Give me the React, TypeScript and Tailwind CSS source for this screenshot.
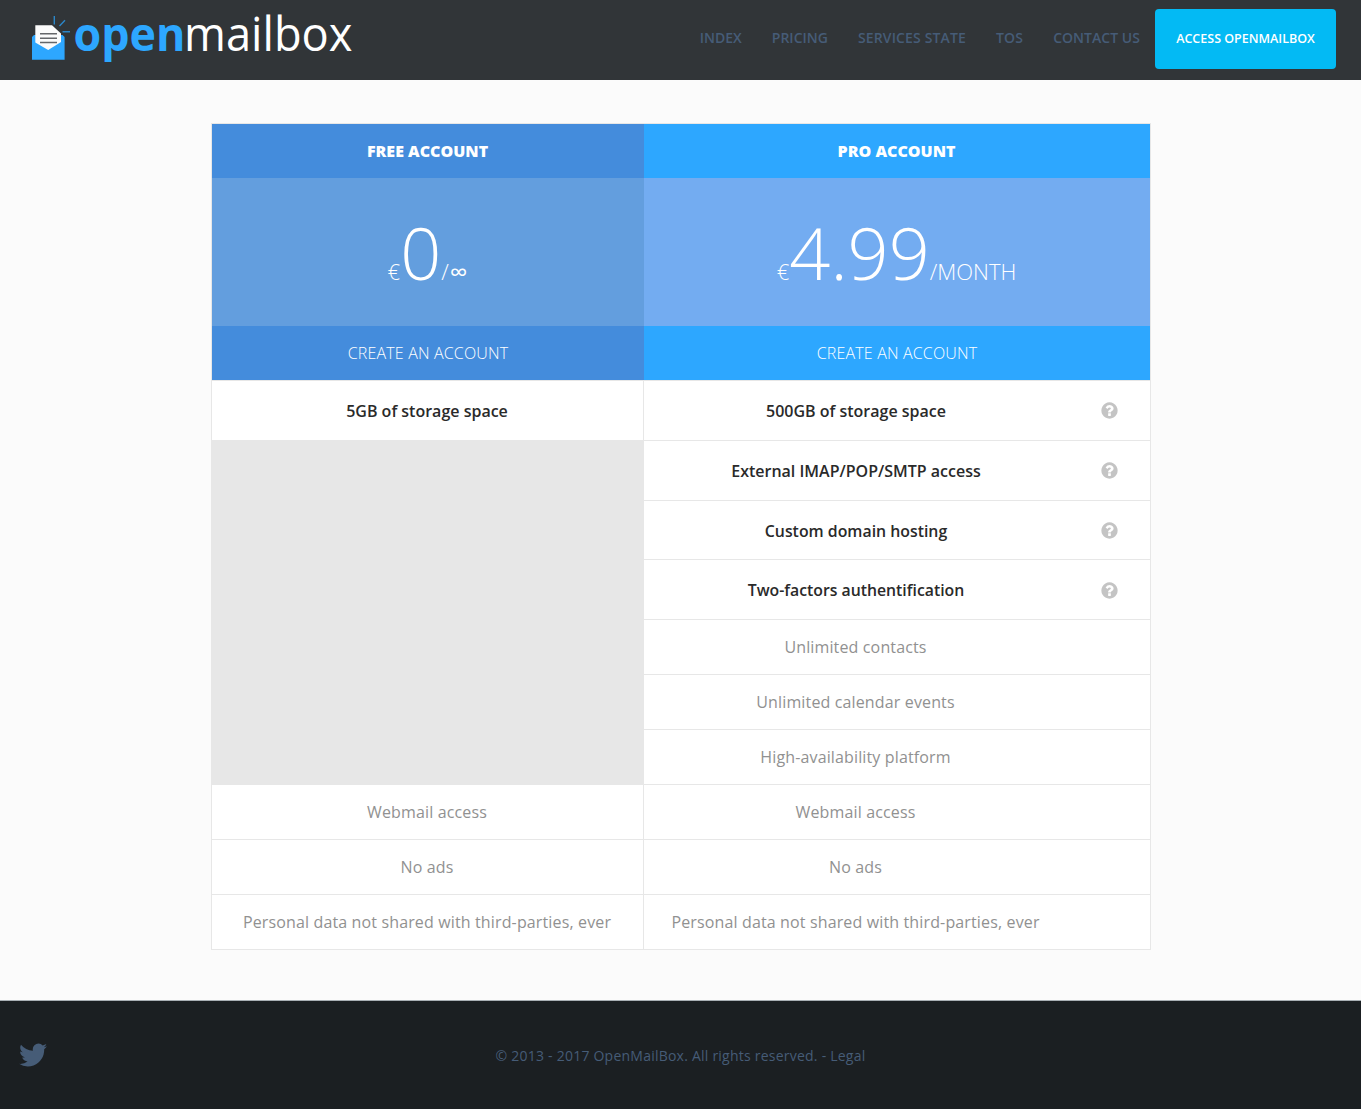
import React from "react";

const navItems = [
  { label: "INDEX", tracking: "" },
  { label: "PRICING", tracking: "" },
  { label: "SERVICES STATE", tracking: "tracking-[0.14px]" },
  { label: "TOS", tracking: "tracking-[0.2px]" },
  { label: "CONTACT US", tracking: "tracking-[0.03px]" },
];

type Row = { label: string; height: string; strong?: string; icon?: string };

const proRows: Row[] = [
  { label: "500GB of storage space", strong: "pl-px", height: "h-[60px]" },
  { label: "External IMAP/POP/SMTP access", strong: "pl-px", height: "h-[60px]" },
  { label: "Custom domain hosting", strong: "pt-[3px] pl-px text-[15.85px]", height: "h-[59px]" },
  { label: "Two-factors authentification", strong: "pt-[3px] pl-px text-[15.8px]", height: "h-[60px]", icon: "pt-0.5" },
  { label: "Unlimited contacts", height: "h-[55px]" },
  { label: "Unlimited calendar events", height: "h-[55px]" },
  { label: "High-availability platform", height: "h-[55px]" },
  { label: "Webmail access", height: "h-[55px]" },
  { label: "No ads", height: "h-[55px]" },
  { label: "Personal data not shared with third-parties, ever", height: "h-[55px]" },
];

const freeRows = ["Webmail access", "No ads", "Personal data not shared with third-parties, ever"];

function Logo() {
  return (
    <svg width="340" height="72" viewBox="28 0 340 72" className="block overflow-visible" aria-label="openmailbox">
      <path d="M32 37 L34 35 H62.5 L64.6 37 V59.7 H32 Z" fill="#2da7ff" />
      <path d="M35.3 25.2 H52 L61 33.5 V42 L48.2 50 L35.3 42.5 Z" fill="#fbfbfb" />
      <path d="M40 33.7 H57 M40 38.2 H57 M40 42.6 H57" stroke="#65676a" strokeWidth="1.5" />
      <path d="M54.3 16 V24.5 M59.5 26 L65 20.3 M62.5 31.7 H70" stroke="#2b86c8" strokeWidth="1.4" />
      <text x="73.4" y="50.5" fontSize="46" fontWeight="700" fill="#2da7ff" textLength="112" lengthAdjust="spacingAndGlyphs" className="font-['Open_Sans',sans-serif]">open</text>
      <text x="184" y="50.5" fontSize="48" fontWeight="400" fill="#fff" textLength="168.5" lengthAdjust="spacingAndGlyphs" className="font-['Open_Sans',sans-serif]">mailbox</text>
    </svg>
  );
}

function HelpIcon() {
  return (
    <svg width="19" height="19" viewBox="0 0 1792 1792" fill="#c4c4c4" className="block">
      <path d="M1024 1376v-192q0-14-9-23t-23-9h-192q-14 0-23 9t-9 23v192q0 14 9 23t23 9h192q14 0 23-9t9-23zm256-672q0-88-55.5-163t-138.5-116-170-41q-243 0-371 213-15 24 8 42l132 100q7 6 19 6 16 0 25-12 53-68 86-92 34-24 86-24 48 0 85.5 26t37.5 59q0 38-20 61t-68 45q-63 28-115.5 86.5t-52.5 125.5v36q0 14 9 23t23 9h192q14 0 23-9t9-23q0-19 21.5-49.5t54.5-49.5q32-18 49-28.5t46-35 44.5-48 28-60.5 12.5-81zm384 192q0 209-103 385.5t-279.5 279.5-385.5 103-385.5-103-279.5-279.5-103-385.5 103-385.5 279.5-279.5 385.5-103 385.5 103 279.5 279.5 103 385.5z" />
    </svg>
  );
}

function TwitterIcon() {
  return (
    <svg width="32" height="32" viewBox="0 0 1792 1792" fill="#465c77" className="block">
      <path d="M1684 408q-67 98-162 167 1 14 1 42 0 130-38 259.5t-115.5 248.5-184.5 210.5-258 146-323 54.5q-271 0-491-145 35 4 78 4 225 0 401-138-105-2-188-64.5t-114-159.5q33 5 61 5 43 0 85-11-112-23-185.5-111.5t-73.5-205.5v-4q68 38 146 41-66-44-105-115t-39-154q0-88 44-163 121 149 294.5 238.5t371.5 99.5q-8-38-8-74 0-134 94.5-228.5t228.5-94.5q140 0 236 102 109-21 205-78-37 115-142 178 93-10 186-50z" />
    </svg>
  );
}

function PlanHead({ title, amount, unit, solid, soft }: { title: string; amount: string; unit: React.ReactNode; solid: string; soft: string }) {
  return (
    <div className="text-white">
      <div className={`flex h-[54px] items-center justify-center text-base font-extrabold ${solid}`}>{title}</div>
      <div className={`flex h-[148px] items-baseline justify-center text-[22px] leading-[148px] font-light ${soft}`}>
        <span>€</span>
        <span className="text-[72px]">{amount}</span>
        <span>{unit}</span>
      </div>
      <div className={`flex h-[54px] items-center justify-center pl-px text-base font-light tracking-[0.16px] ${solid}`}>CREATE AN ACCOUNT</div>
    </div>
  );
}

export default function App() {
  return (
    <div className="flex h-[1109px] flex-col bg-[#fbfbfb] font-['Open_Sans',sans-serif]">
      <header className="flex h-20 shrink-0 items-start justify-between bg-[#313538] pr-[25px] pl-7">
        <Logo />
        <nav className="flex pt-[9px]">
          {navItems.map((item) => (
            <a key={item.label} className={`px-[15px] pt-[19px] text-sm leading-5 font-semibold whitespace-nowrap text-[#465c77] ${item.tracking}`}>{item.label}</a>
          ))}
          <a className="flex h-[60px] w-[181px] items-center justify-center rounded bg-[#03baf4] text-[12.5px] font-semibold whitespace-nowrap text-white">
            ACCESS OPENMAILBOX
          </a>
        </nav>
      </header>

      <main className="flex grow justify-center pt-[43px]">
        <div className="h-[827px] w-[940px] border border-[#e7e7e7] bg-white">
          <div className="grid grid-cols-[432px_506px]">
            <PlanHead title="FREE ACCOUNT" amount="0" unit={<>/<span className="ml-px inline-block translate-y-px text-[25px] leading-none font-normal">∞</span></>} solid="bg-[#448cdc]" soft="bg-[#639ede]" />
            <PlanHead title="PRO ACCOUNT" amount="4.99" unit="/MONTH" solid="bg-[#2da7ff]" soft="bg-[#73acf1]" />
          </div>
          <div className="grid grid-cols-[432px_506px] text-center text-base text-[#919191]">
            <div className="border-r border-[#e7e7e7]">
              <div className="flex h-[60px] items-center justify-center border-t border-[#e7e7e7] font-semibold text-[#2a2a2a]">5GB of storage space</div>
              <div className="h-[344px] bg-[#e7e7e7]" />
              {freeRows.map((label) => (
                <div key={label} className="flex h-[55px] items-center justify-center border-t border-[#e7e7e7] tracking-[0.14px]">{label}</div>
              ))}
            </div>
            <div>
              {proRows.map((row) => (
                <div key={row.label} className={`grid grid-cols-[424px_82px] items-center border-t border-[#e7e7e7] ${row.height}`}>
                  <span className={row.strong ? `font-semibold text-[#2a2a2a] ${row.strong}` : "tracking-[0.14px]"}>{row.label}</span>
                  {row.strong && (
                    <span className={`flex justify-center pl-[2px] ${row.icon ?? ""}`}><HelpIcon /></span>
                  )}
                </div>
              ))}
            </div>
          </div>
        </div>
      </main>

      <footer className="grid h-[109px] shrink-0 grid-cols-[1fr_auto_1fr] items-center border-t border-[#a9b0b5] bg-[#1b1f22]">
        <div className="pb-px pl-[17px]"><TwitterIcon /></div>
        <p className="pt-0.5 text-sm tracking-[0.23px] whitespace-nowrap text-[#465c77]">© 2013 - 2017 OpenMailBox. All rights reserved. - Legal</p>
        <div />
      </footer>
    </div>
  );
}
